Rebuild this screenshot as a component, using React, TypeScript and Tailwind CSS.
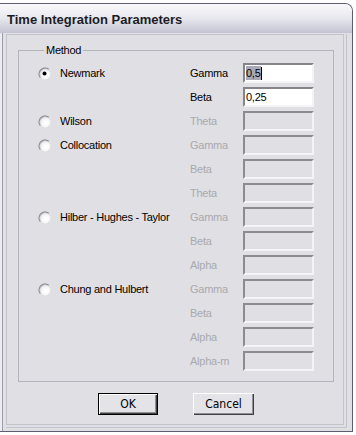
type Row = {
  radio?: string
  checked?: boolean
  label: string
  enabled?: boolean
  value?: string
  selected?: boolean
}

const rows: Row[] = [
  { radio: "Newmark", checked: true, label: "Gamma", enabled: true, value: "0,5", selected: true },
  { label: "Beta", enabled: true, value: "0,25" },
  { radio: "Wilson", label: "Theta" },
  { radio: "Collocation", label: "Gamma" },
  { label: "Beta" },
  { label: "Theta" },
  { radio: "Hilber - Hughes - Taylor", label: "Gamma" },
  { label: "Beta" },
  { label: "Alpha" },
  { radio: "Chung and Hulbert", label: "Gamma" },
  { label: "Beta" },
  { label: "Alpha" },
  { label: "Alpha-m" },
]

function Radio({ checked }: { checked?: boolean }) {
  return (
    <svg width="13" height="13" viewBox="0 0 13 13" className="shrink-0">
      <defs>
        <radialGradient id="rfill" cx="0.62" cy="0.62" r="0.62">
          <stop offset="0" stopColor="#ffffff" />
          <stop offset="0.55" stopColor="#f7f7f8" />
          <stop offset="1" stopColor="#c4c4ca" />
        </radialGradient>
      </defs>
      <circle cx="6.5" cy="6.5" r="6" fill="url(#rfill)" />
      <path d="M2.3 10.7 A6 6 0 0 1 10.7 2.3" stroke="#8e8e96" strokeWidth="1.2" fill="none" />
      {checked && <circle cx="6.5" cy="6.5" r="2" fill="#000" />}
    </svg>
  )
}

export default function App() {
  return (
    <div className="w-[356px] h-[435px] bg-white overflow-hidden pt-[3px] font-['Liberation_Sans',Arial,sans-serif]">
      <div className="w-[353px] h-[429px] flex flex-col border-t border-r border-b border-[#5e5e72] rounded-tr-[8px] overflow-hidden">
        {/* title bar */}
        <div className="h-[29px] shrink-0 flex items-center pl-[7px] bg-gradient-to-b from-[#fafafc] via-[#e7e7ee] to-[#c3c3d1]">
          <span className="text-[13px] font-bold text-[#1c1c24] leading-none pt-[1px]">
            Time Integration Parameters
          </span>
        </div>

        {/* body */}
        <div className="flex-1 flex bg-[#e0dfe3] pl-[6px] pr-[5px] pt-[1px] pb-[3px] shadow-[inset_2px_0_0_#ececf0,inset_3px_0_0_#9c9cac]">
          <div className="flex-1 flex border-r border-b border-[#c4c4cc] pr-[2px] pb-[2px]">
            <div className="flex-1 flex flex-col border border-[#c4c4cc] pl-[11px] pr-[9px]">
              <fieldset className="mt-[9px] border border-[#b4b4bc] pt-[4px] pb-[8px] pl-[19px]">
                <legend className="ml-[6px] px-[2px] text-[11px] leading-[13px] tracking-[-0.25px] text-black">
                  Method
                </legend>
                {rows.map((r, i) => (
                  <div key={i} className="h-[24px] grid grid-cols-[152px_53px_71px] items-center">
                    <div className="flex items-center">
                      {r.radio && (
                        <>
                          <Radio checked={r.checked} />
                          <span className="ml-[9px] text-[11px] tracking-[-0.25px] text-black">{r.radio}</span>
                        </>
                      )}
                    </div>
                    <span
                      className={
                        r.enabled
                          ? "text-[11px] tracking-[-0.25px] text-black"
                          : "text-[11px] tracking-[-0.25px] text-[#a9a9ae]"
                      }
                    >
                      {r.label}
                    </span>
                    <div
                      className={
                        r.enabled
                          ? "h-[20px] flex items-center pl-[1px] border-2 border-t-[#858589] border-l-[#858589] border-b-[#f4f4f6] border-r-[#f4f4f6] bg-white"
                          : "h-[20px] flex items-center pl-[1px] border-2 border-t-[#8c8c90] border-l-[#8c8c90] border-b-[#f4f4f6] border-r-[#f4f4f6] bg-[#e0dfe3]"
                      }
                    >
                      {r.value &&
                        (r.selected ? (
                          <>
                            <span className="text-[11px] leading-[14px] tracking-[-0.25px] text-black bg-[#a8a8b6]">{r.value}</span>
                            <span className="w-[1px] h-[13px] bg-black" />
                          </>
                        ) : (
                          <span className="text-[11px] tracking-[-0.25px] text-black">{r.value}</span>
                        ))}
                    </div>
                  </div>
                ))}
              </fieldset>

              <div className="flex mt-[11px]">
                <button className="ml-[80px] w-[60px] h-[22px] border border-black bg-[#e4e4e8] shadow-[inset_1px_1px_0_#ffffff,inset_-1px_-1px_0_#404040,inset_-2px_-2px_0_#909094] text-[12px] text-black font-['DejaVu_Sans_Condensed','Liberation_Sans',sans-serif]">
                  OK
                </button>
                <button className="ml-[35px] w-[61px] h-[22px] bg-[#e4e4e8] shadow-[inset_1px_1px_0_#ffffff,inset_-1px_-1px_0_#404040,inset_-2px_-2px_0_#909094] text-[12px] text-black font-['DejaVu_Sans_Condensed','Liberation_Sans',sans-serif]">
                  Cancel
                </button>
              </div>
            </div>
          </div>
        </div>
      </div>
    </div>
  )
}
